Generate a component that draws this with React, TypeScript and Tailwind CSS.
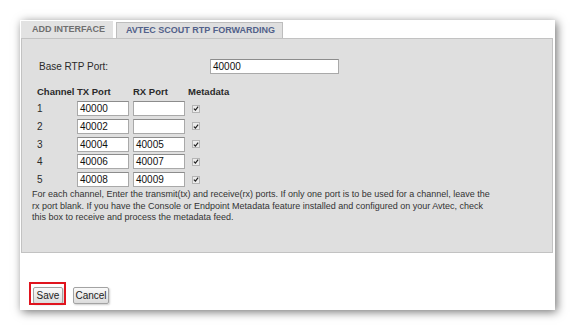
import React from "react";

const rows = [
  { n: "1", tx: "40000", rx: "" },
  { n: "2", tx: "40002", rx: "" },
  { n: "3", tx: "40004", rx: "40005" },
  { n: "4", tx: "40006", rx: "40007" },
  { n: "5", tx: "40008", rx: "40009" },
];

function Check() {
  return (
    <span className="flex h-[8px] w-[8px] items-center justify-center border border-[#b5b5b5] bg-[#ececec]">
      <svg width="7" height="7" viewBox="0 0 7 7">
        <path d="M1 3.6 L2.8 5.3 L6 1.3" stroke="#222" strokeWidth="1.4" fill="none" />
      </svg>
    </span>
  );
}

function Input({ value, w }: { value: string; w: string }) {
  return (
    <div
      className={`${w} h-[15px] border border-[#a9a9a9] border-t-[#8c8c8c] bg-white pl-[2px] text-[10px] leading-[13px] text-[#111]`}
    >
      {value}
    </div>
  );
}

export default function App() {
  return (
    <div
      className="h-[330px] w-[575px] bg-white pl-[20px] pt-[20px]"
      style={{ fontFamily: '"Liberation Sans", Arial, sans-serif' }}
    >
      <div className="flex h-[290px] w-[535px] flex-col bg-white pl-[1px] pt-[1px] shadow-[2px_2px_9px_rgba(0,0,0,0.55)]">
        {/* tabs */}
        <div className="flex h-[17px] items-end">
          <div className="flex h-[17px] w-[92px] items-center bg-[#e2e2e2] pl-[11px] text-[9px] font-bold text-[#6f6f6f]">
            ADD INTERFACE
          </div>
          <div className="ml-[3px] flex h-[16px] w-[167px] items-center border border-b-0 border-[#bdbdbd] bg-[#dfdfdf] pl-[9px] text-[9px] font-bold text-[#52618a]">
            AVTEC SCOUT RTP FORWARDING
          </div>
        </div>
        {/* content */}
        <div className="h-[215px] w-[532px] border border-[#c2c2c2] bg-[#dfdfdf] text-[#2a2a2a]">
          <div className="mt-[19px] flex h-[16px] items-center">
            <span className="ml-[17px] w-[171px] text-[10px]">Base RTP Port:</span>
            <Input value="40000" w="w-[129px]" />
          </div>
          <div className="mt-[12px] flex h-[12px] items-center text-[9.5px] font-bold">
            <span className="ml-[15px] w-[40px]">Channel</span>
            <span className="w-[56px]">TX Port</span>
            <span className="w-[55px]">RX Port</span>
            <span>Metadata</span>
          </div>
          <div className="mt-[3px] flex flex-col gap-[2.75px]">
            {rows.map((r) => (
              <div key={r.n} className="flex h-[15px] items-center text-[10px]">
                <span className="ml-[15px] w-[40px]">{r.n}</span>
                <Input value={r.tx} w="w-[52px]" />
                <span className="w-[4px]" />
                <Input value={r.rx} w="w-[52px]" />
                <span className="w-[7px]" />
                <Check />
              </div>
            ))}
          </div>
          <p className="ml-[10px] mt-[2px] w-[462px] text-[9px] leading-[11.5px] text-[#333]">
            For each channel, Enter the transmit(tx) and receive(rx) ports. If only one port is to be used for a channel, leave the rx port blank. If you have the Console or Endpoint Metadata feature installed and configured on your Avtec, check this box to receive and process the metadata feed.
          </p>
        </div>
        {/* buttons */}
        <div className="mt-[34px] flex items-center pl-[12px]">
          <div className="relative flex">
            <button className="h-[17px] w-[30px] rounded-[2px] border border-[#a3a3a3] bg-gradient-to-b from-[#fafafa] to-[#dcdcdc] text-[10px] leading-[15px] text-[#222] shadow-[1px_1px_2px_rgba(0,0,0,0.2)]">
              Save
            </button>
            <span className="pointer-events-none absolute left-[-4px] top-[-5px] h-[23px] w-[37px] border-2 border-[#e0141e]" />
          </div>
          <button className="ml-[10px] h-[17px] w-[36px] rounded-[2px] border border-[#a3a3a3] bg-gradient-to-b from-[#fafafa] to-[#dcdcdc] text-[10px] leading-[15px] text-[#222] shadow-[1px_1px_2px_rgba(0,0,0,0.2)]">
            Cancel
          </button>
        </div>
      </div>
    </div>
  );
}
